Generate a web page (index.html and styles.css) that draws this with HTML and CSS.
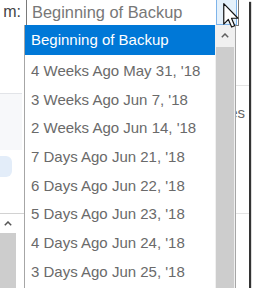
FILE: index.html
```html
<!DOCTYPE html>
<html lang="en">
<head>
    <meta charset="UTF-8">
    <meta name="viewport" content="width=device-width, initial-scale=1.0">
    <title>Restore point</title>
    <link rel="stylesheet" href="styles.css">
</head>
<body>

    <div class="shot">

        <div class="header">
            <div class="label">m:</div>
            <div class="combo">
                <span class="combo-value">Beginning of Backup</span>
                <span class="combo-btn"></span>
            </div>
        </div>

        <div class="content">
            <div class="side">
                <div class="side-panel"></div>
                <div class="chip"></div>
                <div class="mini-scroll">
                    <div class="mini-up">
                        <svg width="8" height="5" viewBox="0 0 8 5"><path d="M0.8 4.2 L4 1 L7.2 4.2" fill="none" stroke="#555" stroke-width="1.5"/></svg>
                    </div>
                    <div class="mini-thumb"></div>
                </div>
            </div>
            <div class="main">
                <div class="main-head"></div>
                <div class="main-row">Files</div>
            </div>
        </div>

        <div class="dropdown">
            <ul class="options">
                <li class="option selected">Beginning of Backup</li>
                <li class="option">4 Weeks Ago May 31, '18</li>
                <li class="option">3 Weeks Ago Jun 7, '18</li>
                <li class="option">2 Weeks Ago Jun 14, '18</li>
                <li class="option">7 Days Ago Jun 21, '18</li>
                <li class="option">6 Days Ago Jun 22, '18</li>
                <li class="option">5 Days Ago Jun 23, '18</li>
                <li class="option">4 Days Ago Jun 24, '18</li>
                <li class="option">3 Days Ago Jun 25, '18</li>
            </ul>
            <div class="scrollbar">
                <div class="scroll-up">
                    <svg width="8" height="5" viewBox="0 0 8 5"><path d="M0.8 4.2 L4 1 L7.2 4.2" fill="none" stroke="#606060" stroke-width="1.5"/></svg>
                </div>
                <div class="scroll-thumb"></div>
            </div>
        </div>

        <svg class="cursor" width="16" height="25" viewBox="0 0 12 19">
            <polygon points="0.5,0.5 0.5,16 4,12.5 6.5,18.3 8.8,17.3 6.4,11.6 11.3,11.6" fill="#fff" stroke="#111" stroke-width="0.9" stroke-linejoin="round"/>
        </svg>

    </div>

</body>
</html>
```

FILE: styles.css
```css
* {
    box-sizing: border-box;
}

body {
    margin: 0;
    background: #fff;
    font-family: "Liberation Sans", Arial, sans-serif;
    font-size: 15px;
}

.shot {
    position: relative;
    width: 249px;
    height: 288px;
    overflow: hidden;
    background: #fff;
    box-shadow: 2px 2px 1px rgba(0,0,0,0.8);
}

/* top row: label + combo box */
.header {
    display: flex;
    height: 26px;
}

.label {
    width: 21px;
    text-align: right;
    white-space: nowrap;
    color: #444;
    font-size: 16px;
    line-height: 24px;
    margin-right: 5px;
}

.combo {
    width: 213px;
    height: 26px;
    display: flex;
    border: 1px solid #7a7a7a;
    border-top: none;
}

.combo-value {
    flex: 1;
    padding-left: 5px;
    color: #777;
    font-size: 16.4px;
    line-height: 24px;
    white-space: nowrap;
}

.combo-btn {
    width: 21px;
    background: #e5f1fb;
    border: 1px solid #7eb4ea;
    border-top: none;
    margin-right: 1px;
}

/* what sits under the open list */
.content {
    display: flex;
    height: 262px;
}

.side {
    width: 24px;
    display: flex;
    flex-direction: column;
}

.side-panel {
    margin-top: 67px;
    width: 22px;
    height: 57px;
    border-top: 1px solid #e2e4e8;
    background: #f7f8fa;
}

.chip {
    margin-top: 6px;
    width: 12px;
    height: 21px;
    background: #e3edf9;
    border-radius: 0 6px 6px 0;
}

.mini-scroll {
    margin-top: 36px;
    flex: 1;
    border-top: 1px solid #d2d2d2;
    display: flex;
    flex-direction: column;
}

.mini-up {
    width: 16px;
    height: 19px;
    display: flex;
    align-items: center;
    justify-content: center;
}

.mini-thumb {
    flex: 1;
    width: 16px;
    background: #cdcdcd;
}

.main {
    flex: 1;
}

.main-head {
    height: 60px;
    border-bottom: 1px solid #e4e4e4;
}

.main-row {
    height: 128px;
    border-bottom: 1px solid #e4e4e4;
    padding: 18px 4px 0 0;
    text-align: right;
    color: #666;
    line-height: 18px;
}

/* the open drop-down list */
.dropdown {
    position: absolute;
    left: 24px;
    top: 25px;
    width: 212px;
    height: 280px;
    display: flex;
    background: #fff;
    border: 1px solid #a6a6a6;
    border-top: none;
}

.options {
    flex: 1;
    margin: 0;
    padding: 0;
    list-style: none;
}

.option {
    height: 28.65px;
    line-height: 28.65px;
    padding-left: 6px;
    color: #6a6a6a;
    white-space: nowrap;
}

.option.selected {
    height: 30px;
    line-height: 30px;
    margin-bottom: 2.2px;
    background: #0078d7;
    color: #fff;
}

.scrollbar {
    width: 20px;
    display: flex;
    flex-direction: column;
    background: #f0f0f0;
}

.scroll-up {
    height: 21px;
    display: flex;
    align-items: center;
    justify-content: center;
    padding-bottom: 1px;
}

.scroll-thumb {
    flex: 1;
    margin: 1px 1px 0;
    background: #cdcdcd;
}

.cursor {
    position: absolute;
    left: 223px;
    top: 3px;
}
```
